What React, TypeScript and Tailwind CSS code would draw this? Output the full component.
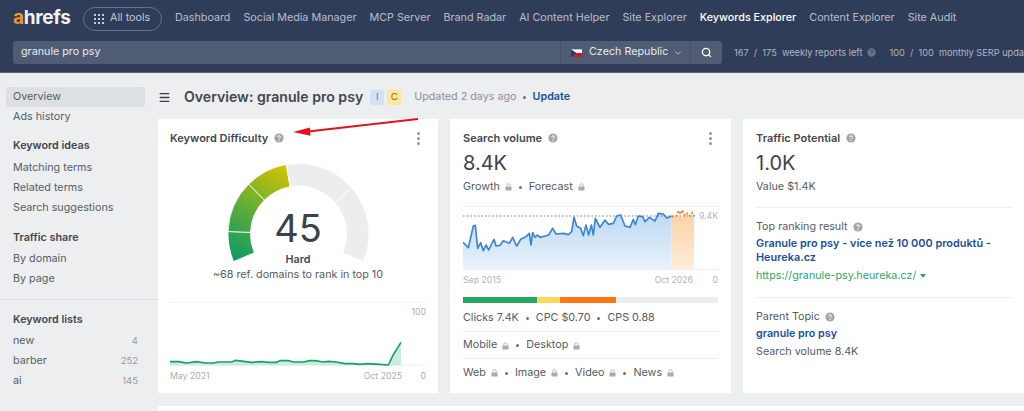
import React from 'react';
import { Search, ChevronDown, Menu } from 'lucide-react';

const navItems = ['Dashboard', 'Social Media Manager', 'MCP Server', 'Brand Radar', 'AI Content Helper', 'Site Explorer', 'Keywords Explorer', 'Content Explorer', 'Site Audit'];

function Help({ className = '' }: { className?: string }) {
  return (
    <svg viewBox="0 0 10 10" className={`w-[10px] h-[10px] shrink-0 ${className}`}>
      <circle cx="5" cy="5" r="4.6" fill="#a3a7ad" />
      <path d="M3.6 4 C3.6 2.4 6.5 2.4 6.5 4 C6.5 5 5 5 5 6" stroke="#fff" strokeWidth="1" fill="none" />
      <circle cx="5" cy="7.4" r="0.6" fill="#fff" />
    </svg>
  );
}

function LockIcon() {
  return (
    <svg viewBox="0 0 8 9" className="w-[7px] h-[8px] shrink-0 ml-[5px]">
      <path d="M2 4 V2.8 a2 2 0 0 1 4 0 V4" stroke="#a8acb2" strokeWidth="1" fill="none" />
      <rect x="0.5" y="4" width="7" height="4.6" rx="0.6" fill="#a8acb2" />
    </svg>
  );
}

function Dot() {
  return <span className="w-[3px] h-[3px] rounded-full bg-[#6b7078] mx-[7px] shrink-0" />;
}

function Dots() {
  return (
    <div className="flex flex-col gap-[2px] shrink-0">
      <span className="w-[3px] h-[3px] rounded-full bg-[#8f9399]" />
      <span className="w-[3px] h-[3px] rounded-full bg-[#8f9399]" />
      <span className="w-[3px] h-[3px] rounded-full bg-[#8f9399]" />
    </div>
  );
}

function CardTitle({ title, dots = true }: { title: string; dots?: boolean }) {
  return (
    <div className="flex items-center h-[14px]">
      <span className="font-semibold text-[#42474e] text-[11px]">{title}</span>
      <Help className="ml-[6px]" />
      {dots && <div className="ml-auto mr-[6px]"><Dots /></div>}
    </div>
  );
}

function polar(r: number, deg: number) {
  const a = (deg * Math.PI) / 180;
  return [70.5 + r * Math.cos(a), 72 - r * Math.sin(a)];
}

function segment(from: number, to: number) {
  const [x1, y1] = polar(70.5, from);
  const [x2, y2] = polar(70.5, to);
  const [x3, y3] = polar(48, to);
  const [x4, y4] = polar(48, from);
  return `M${x1} ${y1} A70.5 70.5 0 0 1 ${x2} ${y2} L${x3} ${y3} A48 48 0 0 0 ${x4} ${y4} Z`;
}

function Gauge() {
  return (
    <svg viewBox="0 0 141 104" className="w-[141px] h-[104px] block">
      <defs>
        <linearGradient id="kd" gradientUnits="userSpaceOnUse" x1="8" y1="100" x2="62" y2="6">
          <stop offset="0" stopColor="#0b9a68" />
          <stop offset="0.5" stopColor="#63ad35" />
          <stop offset="1" stopColor="#d5c500" />
        </linearGradient>
      </defs>
      <path d={segment(203, 178)} fill="url(#kd)" stroke="#fff" strokeWidth="0.8" />
      <path d={segment(178, 135)} fill="url(#kd)" stroke="#fff" strokeWidth="0.8" />
      <path d={segment(135, 100)} fill="url(#kd)" stroke="#fff" strokeWidth="0.8" />
      <path d={segment(100, 41)} fill="#ebedef" stroke="#fff" strokeWidth="0.8" />
      <path d={segment(41, -23)} fill="#ebedef" stroke="#fff" strokeWidth="0.8" />
    </svg>
  );
}

const kdLine = '60,216 85,216 110,220 140,216 165,220 190,220 205,217 245,217 258,212 280,215 305,218 335,216 355,218 380,218 390,213 415,213 430,217 460,217 480,213 495,213 520,217 535,215 560,217 585,222 610,222 630,224 650,222 690,224 715,226 730,195 753,158';
const volLine = '39,367 55,383 70,318 76,316 83,385 92,368 100,392 108,375 116,390 125,372 132,358 138,378 150,376 160,362 178,370 188,352 200,378 212,358 228,350 238,340 243,375 248,338 255,352 262,345 270,352 285,348 296,345 308,325 318,342 340,340 355,344 365,335 372,292 380,318 392,325 400,347 408,315 416,345 424,315 430,345 436,295 450,322 465,300 475,313 490,310 500,288 512,285 525,318 540,322 550,298 556,314 565,288 578,290 585,305 598,292 615,303 625,280 640,282 650,294 665,288';
const forecastLine = '665,290 680,288 685,272 692,283 697,270 705,288 712,280 720,288 727,278 732,290';

function KdChart() {
  return (
    <svg viewBox="60 37 765 240" className="w-[255px] h-[80px] block">
      <line x1="60" x2="825" y1="38" y2="38" stroke="#eceef0" strokeWidth="3" />
      <line x1="60" x2="825" y1="227" y2="227" stroke="#eceef0" strokeWidth="3" />
      <polygon points={`${kdLine} 753,227 60,227`} fill="#c9eddb" />
      <polyline points={kdLine} fill="none" stroke="#16a06a" strokeWidth="5" strokeLinejoin="round" />
    </svg>
  );
}

function VolumeChart() {
  return (
    <svg viewBox="39 258 765 195" className="w-[255px] h-[65px] block">
      <defs>
        <linearGradient id="volFill" x1="0" x2="0" y1="0" y2="1">
          <stop offset="0" stopColor="#bcd9f3" />
          <stop offset="1" stopColor="#e9f2fb" />
        </linearGradient>
        <linearGradient id="foreFill" x1="0" x2="0" y1="0" y2="1">
          <stop offset="0" stopColor="#fcd3a8" />
          <stop offset="1" stopColor="#fdeedd" />
        </linearGradient>
      </defs>
      <line x1="39" x2="804" y1="260" y2="260" stroke="#eceef0" strokeWidth="3" />
      <line x1="39" x2="804" y1="449" y2="449" stroke="#eceef0" strokeWidth="3" />
      <polygon points={`${volLine} 665,449 39,449`} fill="url(#volFill)" />
      <rect x="665" y="290" width="67" height="159" fill="url(#foreFill)" />
      <line x1="39" x2="735" y1="288" y2="288" stroke="#777c83" strokeWidth="3" strokeDasharray="5 6" />
      <polyline points={volLine} fill="none" stroke="#3d86cf" strokeWidth="5" strokeLinejoin="round" />
      <polyline points={forecastLine} fill="none" stroke="#f0882a" strokeWidth="5" strokeDasharray="7 5" />
    </svg>
  );
}

function SideItem({ label, count, active }: { label: string; count?: number; active?: boolean }) {
  return (
    <div className={`flex items-center justify-between h-[20px] w-[139px] ml-[6px] px-[7px] rounded-[3px] text-[#585d65] ${active ? 'bg-[#dde0e3]' : ''}`}>
      <span>{label}</span>
      {count !== undefined && <span className="text-[9.5px] text-[#94989e]">{count}</span>}
    </div>
  );
}

function SideHead({ label }: { label: string }) {
  return <div className="h-[20px] w-[139px] ml-[6px] px-[7px] flex items-center font-semibold text-[#42474e]">{label}</div>;
}

export default function App() {
  return (
    <div className="relative h-screen overflow-hidden bg-[#eceef0] font-['Inter',sans-serif] text-[10.75px] text-[#565b63] whitespace-nowrap">
      {/* Header */}
      <div className="h-[73px] bg-[#2f3d59] border-b border-[#55627a] overflow-hidden">
        <div className="flex items-center h-[36px] pt-[1px] pl-[13px]">
          <div className="w-[58px] text-[19px] font-bold leading-none tracking-[-0.3px] text-[#f1f2f4] pb-[2px]">
            <span className="text-[#f5961e]">a</span>hrefs
          </div>
          <div className="ml-[12px] flex items-center h-[24px] w-[79px] pl-[10px] rounded-full border border-[#66718a] text-[#c3c8d2]">
            <div className="grid grid-cols-3 gap-[2px] mr-[6px]">
              {Array.from({ length: 9 }).map((_, i) => (
                <span key={i} className="w-[2px] h-[2px] bg-[#c9cdd6]" />
              ))}
            </div>
            All tools
          </div>
          <div className="ml-[13px] flex gap-[13px]">
            {navItems.map((item) => (
              <span key={item} className={item === 'Keywords Explorer' ? 'text-white font-medium' : 'text-[#b9bfca]'}>
                {item}
              </span>
            ))}
          </div>
        </div>
        <div className="flex items-center h-[23px] mt-[5px] ml-[13px]">
          <div className="w-[547px] shrink-0 h-full bg-[#505c74] rounded-l-[3px] flex items-center pl-[8px] text-[#e8eaee]">
            granule pro psy
          </div>
          <div className="w-[130px] shrink-0 h-full bg-[#505c74] flex items-center pl-[10px] text-[#e8eaee] border-l border-[#465268]">
            <svg viewBox="0 0 12 8" className="w-[11px] h-[8px] mr-[7px]">
              <rect width="12" height="4" fill="#fff" />
              <rect y="4" width="12" height="4" fill="#d7141a" />
              <path d="M0 0 L6 4 L0 8 Z" fill="#11457e" />
            </svg>
            Czech Republic
            <ChevronDown className="w-[10px] h-[10px] ml-[5px] text-[#c9cdd6]" />
          </div>
          <div className="w-[32px] shrink-0 h-full bg-[#505c74] rounded-r-[3px] border-l border-[#465268] flex items-center justify-center">
            <Search className="w-[11px] h-[11px] text-white" strokeWidth={3} />
          </div>
          <div className="ml-[12px] flex items-center text-[9.2px] text-[#b0b6c2]">
            <span>167&nbsp; /&nbsp; 175&nbsp; weekly reports left</span>
            <svg viewBox="0 0 10 10" className="w-[9px] h-[9px] ml-[5px]">
              <circle cx="5" cy="5" r="4.6" fill="#68738a" />
              <path d="M3.6 4 C3.6 2.4 6.5 2.4 6.5 4 C6.5 5 5 5 5 6" stroke="#2f3d59" strokeWidth="1" fill="none" />
            </svg>
            <span className="ml-[13px]">100&nbsp; /&nbsp; 100&nbsp; monthly SERP updates left</span>
          </div>
        </div>
      </div>

      <div className="flex">
        {/* Sidebar */}
        <div className="w-[158px] shrink-0 pt-[14px]">
          <SideItem label="Overview" active />
          <SideItem label="Ads history" />
          <div className="mt-[9px]"><SideHead label="Keyword ideas" /></div>
          <div className="mt-[2px]"><SideItem label="Matching terms" /></div>
          <SideItem label="Related terms" />
          <SideItem label="Search suggestions" />
          <div className="mt-[10px]"><SideHead label="Traffic share" /></div>
          <div className="mt-[1px]"><SideItem label="By domain" /></div>
          <SideItem label="By page" />
          <div className="border-t border-[#dcdfe2] mt-[10px] pt-[10px]">
            <SideHead label="Keyword lists" />
            <div className="mt-[1px]"><SideItem label="new" count={4} /></div>
            <SideItem label="barber" count={252} />
            <SideItem label="ai" count={145} />
          </div>
        </div>

        {/* Main */}
        <div className="flex-1 min-w-0">
          <div className="flex items-center h-[46px] pt-[2px]">
            <Menu className="w-[13px] h-[13px] text-[#3c4148]" strokeWidth={2.4} />
            <span className="ml-[13px] text-[14.1px] font-semibold text-[#42474e]">Overview: granule pro psy</span>
            <span className="ml-[7px] w-[14px] h-[15px] rounded-[2px] bg-[#cfe2f7] text-[9.5px] text-[#5a7ea6] flex items-center justify-center">I</span>
            <span className="ml-[3px] w-[14px] h-[15px] rounded-[2px] bg-[#fbe79a] text-[9.5px] text-[#7c6a1d] flex items-center justify-center">C</span>
            <span className="ml-[13px] text-[#8d9197]">Updated 2 days ago</span>
            <span className="mx-[6px] w-[3px] h-[3px] rounded-full bg-[#6b7078]" />
            <span className="ml-px font-semibold text-[#1d4f9c]">Update</span>
          </div>

          <div className="grid grid-cols-[280px_281px_281px] gap-3 h-[274px]">
            {/* Keyword Difficulty */}
            <div className="bg-white pt-[12px] px-[12px]">
              <CardTitle title="Keyword Difficulty" />
              <div className="relative mt-[17px] flex flex-col items-center h-[122px]">
                <Gauge />
                <div className="absolute top-[44px] inset-x-0 text-center text-[38px] leading-[44px] text-[#3d4249]">45</div>
                <div className="absolute top-[90px] inset-x-0 text-center font-semibold text-[#42474e]">Hard</div>
                <div className="absolute top-[105px] inset-x-0 text-center text-[#565b63]">~68 ref. domains to rank in top 10</div>
              </div>
              <div className="relative mt-[18px]">
                <KdChart />
                <span className="absolute right-0 top-[4px] text-[8.7px] text-[#a8acb2]">100</span>
                <span className="absolute left-0 top-[68px] text-[8.7px] text-[#a8acb2]">May 2021</span>
                <span className="absolute right-[24px] top-[68px] text-[8.7px] text-[#a8acb2]">Oct 2025</span>
                <span className="absolute right-0 top-[68px] text-[8.7px] text-[#a8acb2]">0</span>
              </div>
            </div>

            {/* Search volume */}
            <div className="bg-white pt-[12px] pl-[13px] pr-[13px]">
              <CardTitle title="Search volume" />
              <div className="mt-[4px] text-[20px] leading-[28px] text-[#3d4249]">8.4K</div>
              <div className="flex items-center h-[16px] mt-[2px]">
                Growth<LockIcon /><Dot />Forecast<LockIcon />
              </div>
              <div className="relative mt-[11px] h-[91px]">
                <VolumeChart />
                <span className="absolute right-0 top-[4px] text-[8.7px] text-[#b0b4ba]">9.4K</span>
                <span className="absolute left-0 top-[68px] text-[8.7px] text-[#b0b4ba]">Sep 2015</span>
                <span className="absolute right-[25px] top-[68px] text-[8.7px] text-[#b0b4ba]">Oct 2026</span>
                <span className="absolute right-0 top-[68px] text-[8.7px] text-[#b0b4ba]">0</span>
              </div>
              <div className="flex h-[6px] bg-[#ebedef]">
                <div className="w-[74px] bg-[#27a862]" />
                <div className="w-[23px] bg-[#fbd75b]" />
                <div className="w-[56px] bg-[#fd7716]" />
              </div>
              <div className="flex items-center h-[29px] pt-[2px] border-b border-[#eceef0]">
                Clicks 7.4K<Dot />CPC $0.70<Dot />CPS 0.88
              </div>
              <div className="flex items-center h-[27px] pt-[1px] border-b border-[#eceef0]">
                Mobile<LockIcon /><Dot />Desktop<LockIcon />
              </div>
              <div className="flex items-center h-[27px] pt-[1px]">
                Web<LockIcon /><Dot />Image<LockIcon /><Dot />Video<LockIcon /><Dot />News<LockIcon />
              </div>
            </div>

            {/* Traffic Potential */}
            <div className="bg-white pt-[12px] pl-[13px] pr-[12px]">
              <CardTitle title="Traffic Potential" dots={false} />
              <div className="mt-[4px] text-[20px] leading-[28px] text-[#3d4249]">1.0K</div>
              <div className="h-[16px] mt-[2px] flex items-center">Value $1.4K</div>
              <div className="border-t border-[#eceef0] mt-[12px] pt-[11px]">
                <div className="flex items-center h-[16px]">Top ranking result<Help className="ml-[5px]" /></div>
                <div className="mt-[1px] font-semibold text-[10.9px] leading-[14px] text-[#1d4f9c] whitespace-normal">
                  Granule pro psy - více než 10 000 produktů - Heureka.cz
                </div>
                <div className="mt-[4px] h-[16px] flex items-center text-[#2fa36b]">
                  https://granule-psy.heureka.cz/
                  <span className="ml-[4px] w-0 h-0 border-x-[3px] border-x-transparent border-t-[4px] border-t-[#2fa36b]" />
                </div>
              </div>
              <div className="border-t border-[#eceef0] mt-[13px] pt-[11px]">
                <div className="flex items-center h-[16px]">Parent Topic<Help className="ml-[5px]" /></div>
                <div className="mt-[1px] h-[16px] font-semibold text-[#1d4f9c]">granule pro psy</div>
                <div className="mt-[2px] h-[16px]">Search volume 8.4K</div>
              </div>
            </div>
          </div>

          {/* Next row */}
          <div className="bg-white mt-[13px] h-[40px]" />
        </div>
      </div>

      {/* Annotation arrow */}
      <svg viewBox="0 0 130 22" className="absolute left-[291px] top-[116px] w-[130px] h-[22px] pointer-events-none">
        <path d="M127 3 L17 15.5" stroke="#e3121b" strokeWidth="2.2" />
        <path d="M2 16 L19 11.5 L19.5 19.7 Z" fill="#e3121b" />
      </svg>
    </div>
  );
}
